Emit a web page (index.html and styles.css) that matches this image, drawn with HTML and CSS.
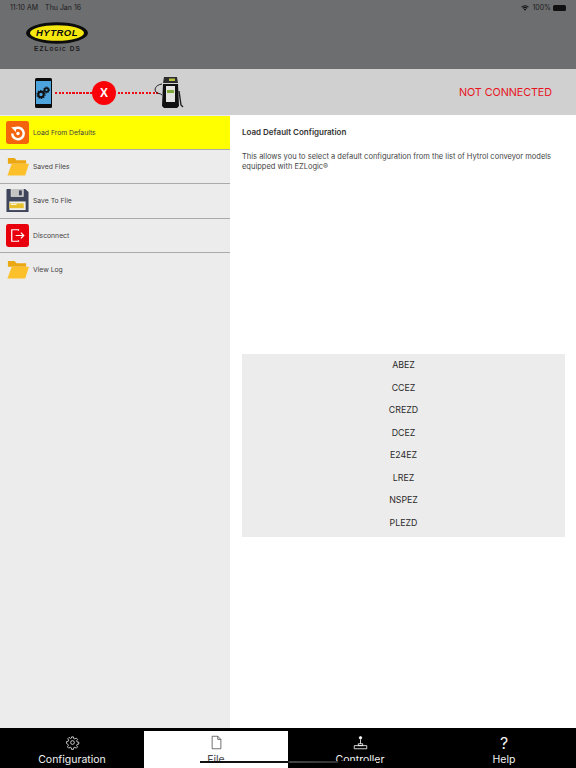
FILE: index.html
```html
<!DOCTYPE html>
<html lang="en">
<head>
<meta charset="utf-8">
<title>Hytrol EZLogic DS</title>
<link rel="stylesheet" href="styles.css">
</head>
<body>
<div class="app">
  <header class="top">
    <div class="status">
      <div class="status-left"><span>11:10 AM</span><span>Thu Jan 16</span></div>
      <div class="status-right">
        <svg class="wifi" viewBox="0 0 16 12"><path d="M8 11.500 5.600 8.900a3.400 3.400 0 0 1 4.800 0zM4.400 7.700 3 6.200a7 7 0 0 1 10 0l-1.400 1.500a5 5 0 0 0-7.200 0zM1.800 5 .4 3.500a10.600 10.600 0 0 1 15.200 0L14.200 5a8.700 8.700 0 0 0-12.400 0z" fill="#111"/></svg>
        <span>100%</span>
        <span class="battery"></span>
      </div>
    </div>
    <div class="logo">
      <svg class="logo-mark" viewBox="0 0 63 22">
        <ellipse cx="31" cy="11" rx="31" ry="10.700" fill="#0c0c0c"/>
        <ellipse cx="31" cy="11" rx="27" ry="7.800" fill="#f6e80f"/>
        <text x="31" y="14.200" class="logo-word" text-anchor="middle">HYTROL</text>
      </svg>
      <div class="logo-sub">EZLogic DS</div>
    </div>
  </header>

  <section class="conn">
    <div class="conn-diagram">
      <svg class="phone" viewBox="0 0 18 30">
        <rect width="17" height="30" rx="1.500" fill="#0b0b0b"/>
        <rect x="1" y="3" width="15" height="23" fill="#4da3dc"/>
        <circle cx="6" cy="16.500" r="2.700" fill="none" stroke="#111" stroke-width="2"/>
        <circle cx="6" cy="16.500" r="4" fill="none" stroke="#111" stroke-width="1.200" stroke-dasharray="1.300 1.200"/>
        <circle cx="11.500" cy="12" r="1.900" fill="none" stroke="#111" stroke-width="1.600"/>
        <circle cx="11.500" cy="12" r="3" fill="none" stroke="#111" stroke-width="1" stroke-dasharray="1.100 1"/>
      </svg>
      <span class="dots dots-a"></span>
      <span class="x-badge">X</span>
      <span class="dots dots-b"></span>
      <svg class="device" viewBox="0 0 30 32">
        <path d="M8 7C1 8 0 13 2 15c2 2 4 1 6 3" fill="none" stroke="#222" stroke-width="1"/>
        <path d="M10 0h13l1 6H9z" fill="#2c2c2c"/>
        <rect x="15" y="1.500" width="6" height="2.500" fill="#b9c23e"/>
        <path d="M9 7h15l1 22-2 2H10l-2-2z" fill="#111"/>
        <rect x="12" y="9" width="9" height="16" fill="#e2e2de"/>
        <rect x="13" y="13" width="7" height="3" fill="#7fa83a"/>
        <path d="M25 14l2 14 2 2" fill="none" stroke="#222" stroke-width="1.400"/>
      </svg>
    </div>
    <div class="conn-state">NOT CONNECTED</div>
  </section>

  <main class="main">
    <nav class="side">
      <div class="row row-active">
        <svg class="icon" viewBox="0 0 24 24">
          <rect width="24" height="24" rx="2.500" fill="#f4640c"/>
          <path d="M8.300 8.700A6 6 0 1 1 6.500 13" fill="none" stroke="#fff" stroke-width="2.600"/>
          <path d="M5.500 6.500 11 6l-.8 5.500z" fill="#fff"/>
          <circle cx="12.500" cy="13" r="1.800" fill="#fff"/>
        </svg>
        <span>Load From Defaults</span>
      </div>
      <div class="row">
        <svg class="icon" viewBox="0 0 24 24"><use href="#folder"/></svg>
        <span>Saved Files</span>
      </div>
      <div class="row">
        <svg class="icon" viewBox="0 0 24 24">
          <path d="M1 0h4v8h13V0h2l3.500 3v21H.500V.500z" fill="#3e4459"/>
          <rect x="5.500" y="0" width="13" height="8" fill="#c4c4c4"/>
          <rect x="13.500" y="1.500" width="3" height="5" fill="#3e4459"/>
          <rect x="3.500" y="13" width="17" height="9" fill="#f0f0e8"/>
          <rect x="3.500" y="15" width="15" height="5" fill="#e8c02c"/>
          <rect x="5" y="15.500" width="6" height="1" fill="#fff"/>
        </svg>
        <span>Save To File</span>
      </div>
      <div class="row">
        <svg class="icon" viewBox="0 0 24 24">
          <rect width="24" height="24" rx="2.500" fill="#e8000d"/>
          <path d="M13 7V6H6v12h7v-1" fill="none" stroke="#fff" stroke-width="1.300"/>
          <path d="M10 12h8M15.500 9l3 3-3 3" fill="none" stroke="#fff" stroke-width="1.300"/>
        </svg>
        <span>Disconnect</span>
      </div>
      <div class="row">
        <svg class="icon" viewBox="0 0 24 24"><use href="#folder"/></svg>
        <span>View Log</span>
      </div>
    </nav>
    <article class="detail">
      <h1>Load Default Configuration</h1>
      <p>This allows you to select a default configuration from the list of Hytrol conveyor models equipped with EZLogic®</p>
      <ul class="models">
        <li>ABEZ</li>
        <li>CCEZ</li>
        <li>CREZD</li>
        <li>DCEZ</li>
        <li>E24EZ</li>
        <li>LREZ</li>
        <li>NSPEZ</li>
        <li>PLEZD</li>
      </ul>
    </article>
  </main>

  <footer class="tabs">
    <div class="tab">
      <svg class="tab-icon" viewBox="0 0 24 24" fill="none" stroke="#fff" stroke-width="1.200"><circle cx="12" cy="12" r="3"/><path d="M10.500 3h3l.5 2.700 1.700.7 2.300-1.500 2.100 2.100-1.500 2.300.7 1.700 2.700.5v3l-2.700.5-.7 1.700 1.500 2.300-2.100 2.100-2.300-1.500-1.700.7-.5 2.700h-3l-.5-2.700-1.700-.7-2.300 1.500-2.100-2.100 1.500-2.300-.7-1.700L2.500 13.500v-3l2.700-.5.7-1.700-1.500-2.300 2.100-2.100 2.300 1.500 1.700-.7z"/></svg>
      <span>Configuration</span>
    </div>
    <div class="tab tab-on">
      <svg class="tab-icon" viewBox="0 0 24 24" fill="none" stroke="#444" stroke-width="1.200"><path d="M5 2h9l5 5v15H5z"/><path d="M14 2v5h5"/></svg>
      <span>File</span>
    </div>
    <div class="tab">
      <svg class="tab-icon" viewBox="0 0 24 24" fill="none" stroke="#fff" stroke-width="1.300"><circle cx="12" cy="4.500" r="2" fill="#fff"/><path d="M12 7v7M8.500 14h7v3h-7zM2 17h20v5H2z"/></svg>
      <span>Controller</span>
    </div>
    <div class="tab">
      <span class="help-mark">?</span>
      <span>Help</span>
    </div>
    <div class="home-bar"></div>
  </footer>
</div>

<svg class="defs" width="0" height="0">
  <defs>
    <g id="folder">
      <path d="M2 3h7l2 2.500h10V9H2z" fill="#eba812"/>
      <path d="M6 9h18l-4 12.500H1.500z" fill="#fcc12a"/>
    </g>
  </defs>
</svg>
</body>
</html>
```

FILE: styles.css
```css
* { box-sizing: border-box; margin: 0; padding: 0; }
html, body { width: 576px; height: 768px; overflow: hidden; }
body { font-family: "Inter", "Liberation Sans", sans-serif; background: #fff; color: #222; }
.app { width: 576px; height: 768px; display: flex; flex-direction: column; position: relative; }

.top { height: 69px; flex: none; background: #6d6e70; display: flex; flex-direction: column; }
.status { height: 12px; display: flex; justify-content: space-between; align-items: flex-end; padding: 0 10px; font-size: 7px; color: #1c1c1c; }
.status-left { display: flex; gap: 7px; }
.status-right { display: flex; align-items: center; gap: 2px; }
.wifi { width: 8px; height: 6px; margin-right: 1px; }
.battery { width: 13px; height: 6px; background: #111; border-radius: 1.500px; }

.logo { margin: 10px 0 0 26px; width: 63px; display: flex; flex-direction: column; align-items: center; }
.logo-mark { width: 63px; height: 22px; display: block; }
.logo-word { font: italic 900 9.500px "Liberation Sans", sans-serif; fill: #0c0c0c; letter-spacing: .5px; }
.logo-sub { font: 700 6.500px/7px "Liberation Sans", sans-serif; letter-spacing: 1.100px; color: #1d1d1d; margin-top: 1px; font-variant: small-caps; }

.conn { height: 46px; flex: none; background: #d0d0d0; display: flex; align-items: center; justify-content: space-between; padding: 0 24px 0 35px; }
.conn-diagram { display: flex; align-items: center; margin-top: 2px; }
.phone { width: 18px; height: 30px; }
.dots { height: 2px; display: block; background: repeating-linear-gradient(90deg, #ef0c14 0 2px, transparent 2px 3.500px); }
.dots-a { width: 37px; margin-left: 2px; }
.dots-b { width: 41px; margin-left: 2px; }
.x-badge { width: 24px; height: 24px; border-radius: 50%; background: #fb0007; color: #fff; font: 700 12px/24px "Liberation Sans", sans-serif; text-align: center; }
.device { width: 30px; height: 32px; margin-left: -5px; }
.conn-state { font-size: 10.800px; color: #e8131d; letter-spacing: -.08px; }

.main { flex: 1; min-height: 0; display: flex; }
.side { width: 230px; flex: none; background: #ececec; padding-top: 1px; }
.row { height: 34.200px; display: flex; align-items: center; gap: 4px; padding-left: 6px; border-bottom: 1px solid #aaa; font-size: 6.800px; color: #444; }
.row:last-child { border-bottom: 0; }
.row-active { background: #ffff00; }
.icon { width: 23px; height: 23px; flex: none; }

.detail { flex: 1; padding: 12px 11px 0 12px; display: flex; flex-direction: column; }
.detail h1 { font-size: 8px; line-height: 11px; font-weight: 600; color: #333; }
.detail p { margin-top: 14px; font-size: 7.500px; line-height: 9.500px; color: #444; }
.models { list-style: none; margin-top: 183px; background: #ececec; }
.models li { height: 22.500px; line-height: 22.500px; text-align: center; font-size: 8.800px; color: #2a2a2a; }
.models li:last-child { height: 25.500px; }

.tabs { height: 40px; flex: none; background: #000; display: grid; grid-template-columns: repeat(4, 1fr); position: relative; overflow: hidden; padding-top: 3px; }
.tab { display: flex; flex-direction: column; align-items: center; color: #f2f2f2; font-size: 10.500px; line-height: 14px; height: 37px; overflow: hidden; }
.tab-on { background: #fff; color: #444; }
.tab-icon { width: 15px; height: 15px; margin-top: 4px; margin-bottom: 3px; }
.help-mark { height: 22px; font-size: 16px; line-height: 25px; }
.home-bar { position: absolute; left: 200px; top: 33px; width: 176px; height: 2px; background: linear-gradient(90deg, #111 0 50%, #444 51%, #333 78%, #000 79%); }
.defs { position: absolute; }
```
